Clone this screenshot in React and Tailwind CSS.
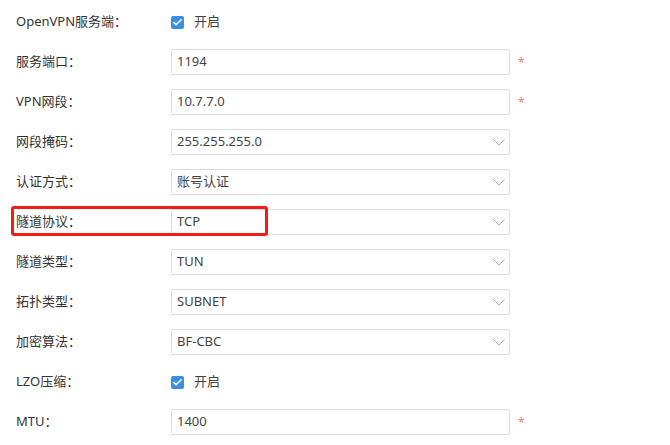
import { Check } from 'lucide-react';

const rows = [
  { label: 'OpenVPN服务端：', type: 'check' },
  { label: '服务端口：', type: 'input', value: '1194', required: true },
  { label: 'VPN网段：', type: 'input', value: '10.7.7.0', required: true },
  { label: '网段掩码：', type: 'select', value: '255.255.255.0' },
  { label: '认证方式：', type: 'select', value: '账号认证' },
  { label: '隧道协议：', type: 'select', value: 'TCP', marked: true },
  { label: '隧道类型：', type: 'select', value: 'TUN' },
  { label: '拓扑类型：', type: 'select', value: 'SUBNET' },
  { label: '加密算法：', type: 'select', value: 'BF-CBC' },
  { label: 'LZO压缩：', type: 'check' },
  { label: 'MTU：', type: 'input', value: '1400', required: true },
];

const Chevron = () => (
  <svg width="12" height="7" viewBox="0 0 12 7" className="shrink-0">
    <path d="M0.5 0.5 L6 6 L11.5 0.5" fill="none" stroke="#a8a8a8" strokeWidth="1" />
  </svg>
);

const Field = ({ row }) => {
  if (row.type === 'check') {
    return (
      <label className="flex items-center gap-[10px]">
        <span className="w-[13px] h-[13px] rounded-[2px] bg-[#3a8ee6] flex items-center justify-center">
          <Check className="w-[11px] h-[11px] text-white" strokeWidth={3.5} />
        </span>
        <span className="text-[#444]">开启</span>
      </label>
    );
  }
  return (
    <div className="flex items-center">
      <div className="w-[339px] h-[26px] border border-[#dcdcdc] rounded-[2px] bg-white flex items-center justify-between pl-[5px] pr-[4px] text-[#444]">
        <span>{row.value}</span>
        {row.type === 'select' && <Chevron />}
      </div>
      {row.required && <span className="ml-[8px] text-[#f08080] text-[12px] leading-none mt-[2px]">*</span>}
    </div>
  );
};

export default function App() {
  return (
    <div
      className="w-[670px] h-[445px] bg-white pt-[2px] text-[13px] overflow-hidden"
      style={{ fontFamily: '"Noto Sans", "Noto Sans CJK SC", sans-serif' }}
    >
      {rows.map((row) => (
        <div key={row.label} className="relative h-10 flex items-center pl-4">
          {row.marked && (
            <div className="absolute left-[11px] top-[4px] w-[257px] h-[30px] border-[3px] border-[#f51b1b] rounded-[3px] pointer-events-none z-10" />
          )}
          <div className="w-[155px] text-[#333]">{row.label}</div>
          <Field row={row} />
        </div>
      ))}
    </div>
  );
}
